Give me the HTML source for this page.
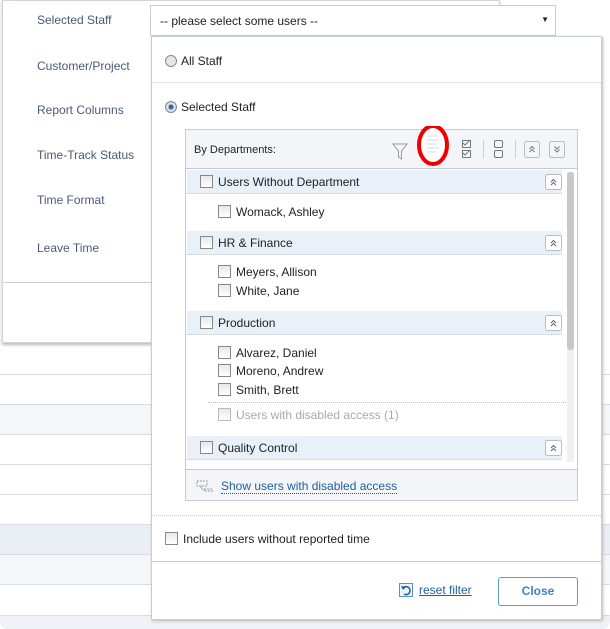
<!DOCTYPE html><html><head><style>
*{box-sizing:border-box}body{margin:0;width:610px;height:629px;overflow:hidden;background:#fff;font-family:"Liberation Sans",Arial,sans-serif;font-size:12px;color:#222;position:relative}
.a{position:absolute}
.row{position:absolute;left:0;width:610px;height:30px;border-bottom:1px solid #d6dbe4}
.lbl{position:absolute;left:37px;color:#4a5a75;font-size:12px}
.cb{display:inline-block;width:13px;height:13px;border:1px solid #888;background:linear-gradient(#e8e8e8,#fff);vertical-align:-2px;margin-right:5px}
.dept{position:absolute;left:1px;width:375px;height:24px;background:#eaf0f8;border-bottom:1px dotted #c5c8d0;padding:5px 0 0 13px;font-size:12px}
.up{position:absolute;right:0;top:4px}
.u{position:absolute;left:32px;font-size:12px}
</style></head><body>
<div class="row" style="top:345px;background:#fff"></div>
<div class="row" style="top:375px"></div>
<div class="row" style="top:405px;background:#f4f6fa"></div>
<div class="row" style="top:435px"></div>
<div class="row" style="top:465px"></div>
<div class="row" style="top:495px"></div>
<div class="row" style="top:525px;background:#eaeef5"></div>
<div class="row" style="top:555px;background:#f4f6fa"></div>
<div class="row" style="top:585px;height:31px"></div>
<div class="a" style="left:0;top:616px;width:610px;height:13px;background:#eef1f6;border-radius:0 0 8px 8px"></div>
<div class="a" style="left:2px;top:0;width:498px;height:343px;background:#fff;border:1px solid #d0d4dc;box-shadow:0 2px 3px #bbb"></div>
<div class="a" style="left:3px;top:282px;width:150px;border-top:1px solid #ccc"></div>
<div class="lbl" style="top:13px">Selected Staff</div>
<div class="lbl" style="top:59px">Customer/Project</div>
<div class="lbl" style="top:103px">Report Columns</div>
<div class="lbl" style="top:148px">Time-Track Status</div>
<div class="lbl" style="top:193px">Time Format</div>
<div class="lbl" style="top:241px">Leave Time</div>
<div class="a" style="left:150px;top:5px;width:406px;height:31px;border:1px solid #ccc;background:#fff;padding:8px 9px;font-size:12px">-- please select some users --<span class="a" style="right:6px;top:9px;font-size:8px">▼</span></div>
<div class="a" style="left:151px;top:36px;width:451px;height:584px;background:#fff;border:1px solid #c8ccd4;box-shadow:1px 1px 3px #bbb">
<div class="a" style="left:13px;top:17px"><span style="display:inline-block;width:12px;height:12px;border:1px solid #888;border-radius:50%;background:#e6e6e6;vertical-align:-2px;margin-right:4px"></span>All Staff</div>
<div class="a" style="left:0;top:45px;width:449px;border-top:1px dotted #c8ccd4"></div>
<div class="a" style="left:13px;top:63px"><span style="display:inline-block;width:12px;height:12px;border:1px solid #888;border-radius:50%;background:radial-gradient(#1a6fb0 30%,#ddd 40%);vertical-align:-2px;margin-right:4px"></span>Selected Staff</div>
<div class="a" style="left:33px;top:92px;width:393px;height:372px;border:1px solid #c5cad8;background:#fff">
 <div class="a" style="left:0;top:0;width:391px;height:39px;background:#f3f5f8;border-bottom:1px solid #c5cad8;padding:14px 8px;font-size:11px">By Departments:</div>
 <svg class="a" style="left:200px;top:-4px" width="180" height="48"><path d="M7 18h14l-5.5 7v8l-3-2v-6z" fill="none" stroke="#999"/>
  <ellipse cx="47" cy="19" rx="14" ry="19" fill="#fff" stroke="#e00" stroke-width="4"/>
  <g stroke="#cdd" stroke-width="1"><line x1="41" y1="10" x2="52" y2="10"/><line x1="41" y1="14" x2="53" y2="14"/><line x1="41" y1="18" x2="50" y2="18"/><line x1="41" y1="22" x2="53" y2="22"/><line x1="41" y1="26" x2="50" y2="26"/></g>
  <g stroke="#777" fill="none"><rect x="76.5" y="14.5" width="8" height="7"/><rect x="76.5" y="24.5" width="8" height="7"/><path d="M77 17l2 2 5-5M77 27l2 2 5-5"/><line x1="97.5" y1="14" x2="97.5" y2="32" stroke="#ccc"/><rect x="108.5" y="14.5" width="8" height="7" rx="1.5"/><rect x="108.5" y="24.5" width="8" height="7" rx="1.5"/><line x1="129.5" y1="14" x2="129.5" y2="32" stroke="#ccc"/><rect x="138.5" y="15.5" width="15" height="16" rx="2" stroke="#bbb"/><path d="M143.5 23l2.5-2.5 2.5 2.5M143.5 26l2.5-2.5 2.5 2.5"/><rect x="163.5" y="15.5" width="15" height="16" rx="2" stroke="#bbb"/><path d="M168.5 20.5l2.5 2.5 2.5-2.5M168.5 23.5l2.5 2.5 2.5-2.5"/></g></svg>
 <div class="dept" style="top:40px"><span class="cb"></span>Users Without Department<svg class="up" width="17" height="16"><rect x=".5" y=".5" width="16" height="15" rx="2" fill="#fff" stroke="#bbb"/><path d="M6 8l2.5-2.5L11 8M6 11l2.5-2.5L11 11" fill="none" stroke="#666"/></svg></div>
 <div class="u" style="top:75px"><span class="cb"></span>Womack, Ashley</div>
 <div class="dept" style="top:101px"><span class="cb"></span>HR &amp; Finance<svg class="up" width="17" height="16"><rect x=".5" y=".5" width="16" height="15" rx="2" fill="#fff" stroke="#bbb"/><path d="M6 8l2.5-2.5L11 8M6 11l2.5-2.5L11 11" fill="none" stroke="#666"/></svg></div>
 <div class="u" style="top:135px"><span class="cb"></span>Meyers, Allison</div>
 <div class="u" style="top:154px"><span class="cb"></span>White, Jane</div>
 <div class="dept" style="top:181px"><span class="cb"></span>Production<svg class="up" width="17" height="16"><rect x=".5" y=".5" width="16" height="15" rx="2" fill="#fff" stroke="#bbb"/><path d="M6 8l2.5-2.5L11 8M6 11l2.5-2.5L11 11" fill="none" stroke="#666"/></svg></div>
 <div class="u" style="top:216px"><span class="cb"></span>Alvarez, Daniel</div>
 <div class="u" style="top:234px"><span class="cb"></span>Moreno, Andrew</div>
 <div class="u" style="top:253px"><span class="cb"></span>Smith, Brett</div>
 <div class="a" style="left:22px;top:272px;width:360px;border-top:1px dotted #bbb"></div>
 <div class="u" style="top:278px;color:#aaa"><span class="cb" style="border-color:#bbb"></span>Users with disabled access (1)</div>
 <div class="dept" style="top:306px"><span class="cb"></span>Quality Control<svg class="up" width="17" height="16"><rect x=".5" y=".5" width="16" height="15" rx="2" fill="#fff" stroke="#bbb"/><path d="M6 8l2.5-2.5L11 8M6 11l2.5-2.5L11 11" fill="none" stroke="#666"/></svg></div>
 <div class="a" style="left:381px;top:42px;width:7px;height:290px;background:#f0f0f0"></div>
 <div class="a" style="left:381px;top:42px;width:7px;height:178px;background:#c8c8c8;border-radius:3px"></div>
 <div class="a" style="left:0;top:339px;width:391px;height:31px;background:#f3f5f8;border-top:1px solid #c5cad8;padding:9px 0 0 35px"><svg class="a" style="left:10px;top:10px" width="18" height="12"><path d="M1 1h10v5H1zM5 6v3h12M8 9v2h9" fill="none" stroke="#999" stroke-dasharray="2 1"/></svg><span style="color:#1f5fa0;border-bottom:1px dotted #1f5fa0">Show users with disabled access</span></div>
</div>
<div class="a" style="left:0;top:478px;width:449px;border-top:1px dotted #c8ccd4"></div>
<div class="a" style="left:13px;top:495px"><span class="cb"></span>Include users without reported time</div>
<div class="a" style="left:0;top:524px;width:449px;border-top:1px solid #c8ccd4"></div>
<svg class="a" style="left:247px;top:546px" width="14" height="14"><rect x=".5" y=".5" width="13" height="13" fill="#eef3fa" stroke="#5b8fcc"/><path d="M4 5a4 4 0 1 1 1 6" fill="none" stroke="#1f5fa0" stroke-width="1.5"/><path d="M2 3l2 4 3-3z" fill="#1f5fa0"/></svg>
<div class="a" style="left:267px;top:546px;color:#1f5fa0;text-decoration:underline">reset filter</div>
<div class="a" style="left:346px;top:540px;width:80px;height:29px;border:1px solid #5b9bdc;border-radius:3px;text-align:center;line-height:27px;color:#3d82c8;font-weight:bold;font-size:12px">Close</div>
</div>
</body></html>
